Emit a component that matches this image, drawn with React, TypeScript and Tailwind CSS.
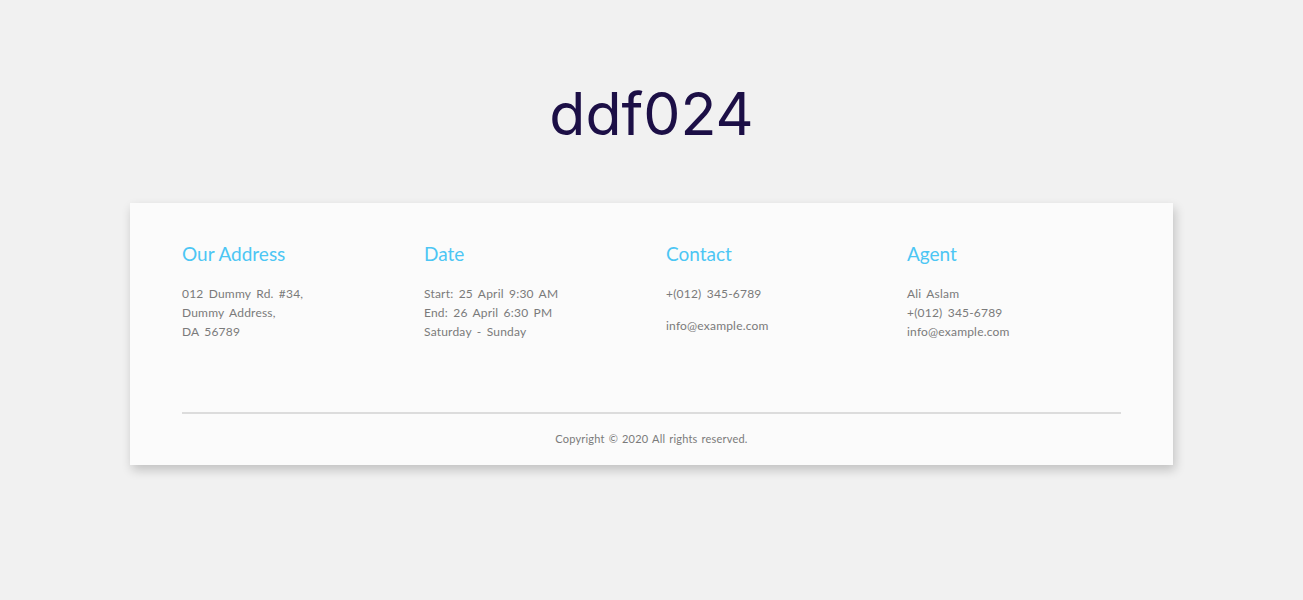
import React from "react";

const cols = [
  { title: "Our Address", lines: ["012 Dummy Rd. #34,", "Dummy Address,", "DA 56789"] },
  { title: "Date", lines: ["Start: 25 April 9:30 AM", "End: 26 April 6:30 PM", "Saturday - Sunday"] },
  { title: "Contact", lines: ["+(012) 345-6789", "info@example.com"], spaced: true },
  { title: "Agent", lines: ["Ali Aslam", "+(012) 345-6789", "info@example.com"] },
];

export default function App() {
  return (
    <div className="min-h-[600px] w-full bg-[#f1f1f1] pt-[76px]">
      <h1 className="text-center text-[59px] leading-[76px] text-[#1c0f46] font-['Inter',sans-serif]">
        ddf024
      </h1>

      <footer className="mx-auto mt-[51px] w-[1043px] bg-[#fbfbfb] px-[52px] pt-[38px] shadow-[2px_5px_10px_rgba(0,0,0,0.2)]">
        <div className="grid grid-cols-[242px_242px_241px_1fr]">
          {cols.map((c) => (
            <div key={c.title}>
              <h4 className="text-[19px] leading-[26px] text-[#4cc6f4] font-['Lato',sans-serif]">{c.title}</h4>
              <div
                className={`mt-[17px] flex flex-col text-[12px] leading-[19px] tracking-[0.2px] [word-spacing:2px] text-[#7a7a7a] font-['Lato',sans-serif] ${
                  c.spaced ? "gap-[13px]" : ""
                }`}
              >
                {c.lines.map((l) => (
                  <span key={l}>{l}</span>
                ))}
              </div>
            </div>
          ))}
        </div>

        <div className="mt-[71px] h-[2px] bg-[#dcdcdc]" />
        <p className="pt-[17px] pb-[18px] text-center text-[11px] leading-[16px] tracking-[0.2px] [word-spacing:1px] text-[#7a7a7a] font-['Lato',sans-serif]">
          Copyright © 2020 All rights reserved.
        </p>
      </footer>
    </div>
  );
}
